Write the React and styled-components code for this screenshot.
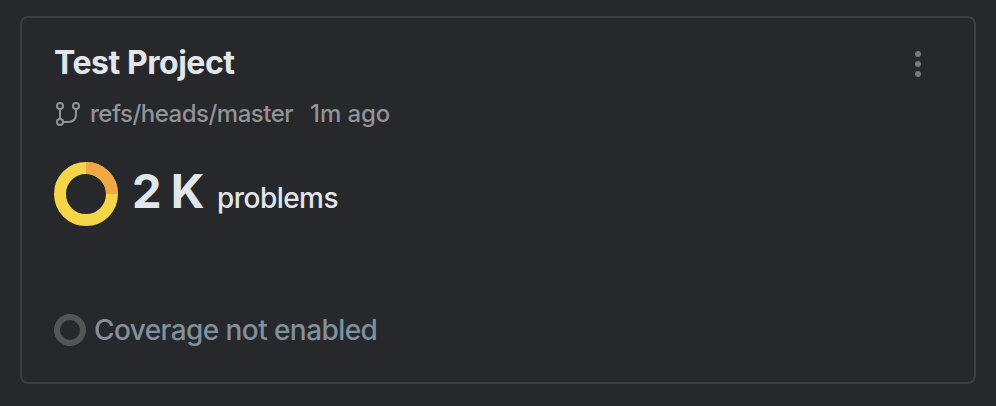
import React from 'react';
import styled, { createGlobalStyle } from 'styled-components';

const GlobalStyle = createGlobalStyle`
  * { box-sizing: border-box; }
  body { margin: 0; background: #26282c; font-family: Inter, "Liberation Sans", sans-serif; }
`;

const Page = styled.main`
  height: 406px;
  padding: 16px 20px 22px;
`;

const Card = styled.article`
  display: flex;
  flex-direction: column;
  height: 368px;
  padding: 26px 32px 36px;
  border: 2px solid #3b3d41;
  border-radius: 8px;
`;

const Header = styled.header`
  display: flex;
  justify-content: space-between;
  align-items: center;
  height: 40px;
`;

const Title = styled.h2`
  margin: -2px 0 0;
  font-size: 32px;
  line-height: 40px;
  font-weight: 700;
  letter-spacing: -0.45px;
  color: #e1e6eb;
  white-space: nowrap;
`;

const MenuButton = styled.button`
  display: flex;
  justify-content: center;
  width: 48px;
  padding: 0;
  border: 0;
  background: none;
`;

const Meta = styled.div`
  display: flex;
  align-items: center;
  height: 32px;
  margin-top: 14px;
  font-size: 24px;
  line-height: 30px;
  font-weight: 450;
  color: #929394;
  white-space: nowrap;
`;

const Branch = styled.span`
  margin: -1px 0 0 9px;
  letter-spacing: -0.5px;
`;

const Age = styled.span`
  margin: -1px 0 0 17px;
  letter-spacing: -0.1px;
`;

const Summary = styled.div`
  display: flex;
  align-items: center;
  height: 64px;
  margin-top: 32px;
`;

const Totals = styled.div`
  display: flex;
  align-items: baseline;
  margin: -6px 0 0 14px;
  color: #e1e6eb;
  white-space: nowrap;
`;

const Count = styled.strong`
  font-size: 47px;
  line-height: 58px;
  font-weight: 700;
  letter-spacing: -0.5px;
  word-spacing: -1px;
`;

const Unit = styled.span`
  margin-left: 13px;
  font-size: 28px;
  font-weight: 450;
  letter-spacing: -0.55px;
`;

const Coverage = styled.footer`
  display: flex;
  align-items: center;
  gap: 8px;
  height: 32px;
  margin-top: auto;
  font-size: 28px;
  font-weight: 450;
  letter-spacing: -0.58px;
  color: #80909c;
  white-space: nowrap;
`;

export default function App() {
  return (
    <Page>
      <GlobalStyle />
      <Card>
        <Header>
          <Title>Test Project</Title>
          <MenuButton aria-label="Project menu">
            <svg width="8" height="28" fill="#77797b">
              <circle cx="4" cy="4" r="3" />
              <circle cx="4" cy="14" r="3" />
              <circle cx="4" cy="24" r="3" />
            </svg>
          </MenuButton>
        </Header>
        <Meta>
          <svg width="27" height="28" fill="none" stroke="#929394" strokeWidth="2">
            <circle cx="6" cy="6" r="3" />
            <circle cx="6" cy="22" r="3" />
            <circle cx="22" cy="6" r="3" />
            <path d="M6 9V19M22 9V14Q22 22 14 22H9" />
          </svg>
          <Branch>refs/heads/master</Branch>
          <Age>1m ago</Age>
        </Meta>
        <Summary>
          <svg width="64" height="64" fill="none" strokeWidth="12">
            <circle cx="32" cy="32" r="26" stroke="#f6d548" />
            <path d="M32 6A26 26 0 0 1 58 32" stroke="#f0a845" />
          </svg>
          <Totals>
            <Count>2 K</Count>
            <Unit>problems</Unit>
          </Totals>
        </Summary>
        <Coverage>
          <svg width="32" height="32" fill="none">
            <circle cx="16" cy="16" r="13" stroke="#545556" strokeWidth="6" />
          </svg>
          <span>Coverage not enabled</span>
        </Coverage>
      </Card>
    </Page>
  );
}
